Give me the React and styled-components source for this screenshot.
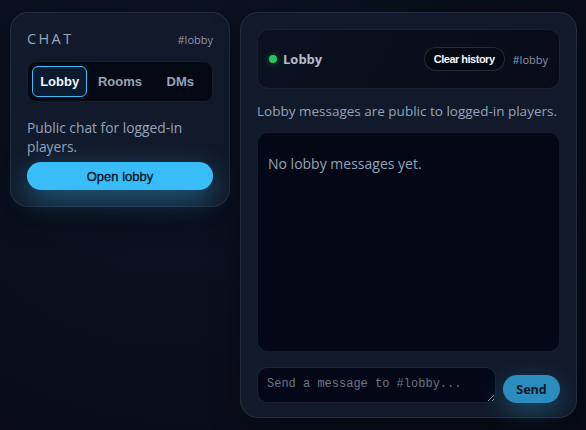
import React from "react";
import styled, { createGlobalStyle } from "styled-components";

const Global = createGlobalStyle`
  html, body { margin: 0; padding: 0; background: #090e1b; }
  body {
    font-family: "Open Sans", "Noto Sans", sans-serif;
    color: #cbd5e1;
    -webkit-font-smoothing: antialiased;
  }
  * { box-sizing: border-box; }
`;

const Page = styled.div`
  display: grid;
  grid-template-columns: 220px 337px;
  gap: 10px;
  align-items: start;
  padding: 12px 9px 0 10px;
  min-height: 430px;
  background: radial-gradient(circle at 30% 20%, #0d1324 0%, #090e1b 60%, #070b16 100%);
`;

const Card = styled.section`
  background: #111a2b;
  border: 1px solid rgba(148, 163, 184, 0.14);
  border-radius: 18px;
  padding: ${(p) => p.$pad || "16px"};
  display: flex;
  flex-direction: column;
  box-shadow: 0 10px 30px rgba(0, 0, 0, 0.35);
`;

const SideHead = styled.div`
  display: flex;
  justify-content: space-between;
  align-items: baseline;
  margin: 0 0 11px;
  line-height: 20px;
`;

const Title = styled.h2`
  margin: 0;
  font-size: 14.5px;
  line-height: 20px;
  font-weight: 400;
  letter-spacing: 2.4px;
  color: #9aa6b8;
`;

const Tag = styled.span`
  font-size: 11px;
  color: #8b97a8;
`;

const Tabs = styled.div`
  display: grid;
  grid-template-columns: repeat(3, 1fr);
  gap: 5px;
  padding: 4px;
  background: #050914;
  border: 1px solid rgba(148, 163, 184, 0.14);
  border-radius: 9px;
`;

const Tab = styled.button`
  height: 31px;
  border-radius: 6px;
  border: 1px solid ${(p) => (p.$active ? "#38bdf8" : "transparent")};
  background: ${(p) => (p.$active ? "#0c1a30" : "transparent")};
  color: ${(p) => (p.$active ? "#f1f5f9" : "#94a3b8")};
  font-family: "Liberation Sans", Arial, sans-serif;
  font-weight: 700;
  font-size: 13px;
  padding: 0;
  cursor: pointer;
`;

const Blurb = styled.p`
  margin: 16px 0 6px;
  font-size: 13.8px;
  line-height: 19px;
  color: #94a3b8;
`;

const PrimaryButton = styled.button`
  height: 28px;
  border: none;
  border-radius: 999px;
  background: #38bdf8;
  color: #08101e;
  font-family: "Liberation Sans", Arial, sans-serif;
  font-size: 13px;
  -webkit-text-stroke: 0.3px #08101e;
  box-shadow: 0 10px 28px rgba(56, 189, 248, 0.4);
  cursor: pointer;
`;

const Header = styled.div`
  height: 60px;
  display: flex;
  align-items: center;
  gap: 8px;
  padding: 0 11px;
  border: 1px solid rgba(148, 163, 184, 0.12);
  border-radius: 11px;
  background: linear-gradient(120deg, #0b1120 0%, #080c19 100%);
`;

const Dot = styled.span`
  width: 8px;
  height: 8px;
  border-radius: 50%;
  background: #22c55e;
  box-shadow: 0 0 6px rgba(34, 197, 94, 0.5);
`;

const RoomName = styled.span`
  font-size: 13px;
  font-weight: 700;
  color: #b4bccb;
  margin-left: -2px;
`;

const Spacer = styled.div`
  flex: 1;
`;

const Pill = styled.button`
  height: 24px;
  padding: 0 9px;
  border-radius: 999px;
  border: 1px solid rgba(148, 163, 184, 0.22);
  background: #050914;
  color: #f1f5f9;
  font-family: "Liberation Sans", Arial, sans-serif;
  font-weight: 700;
  font-size: 11px;
  letter-spacing: -0.5px;
  cursor: pointer;
`;

const Note = styled.p`
  margin: 12px 0 11px;
  font-size: 13.5px;
  line-height: 20px;
  color: #94a3b8;
`;

const Messages = styled.div`
  height: 220px;
  padding: 21px 10px;
  background: #040816;
  border: 1px solid rgba(148, 163, 184, 0.12);
  border-radius: 11px;
  font-size: 14px;
  color: #94a3b8;
`;

const Composer = styled.form`
  display: flex;
  align-items: center;
  gap: 7px;
  margin-top: 14px;
`;

const Input = styled.textarea`
  flex: 1;
  height: 36px;
  padding: 8px 9px;
  border-radius: 10px;
  border: 1px solid rgba(148, 163, 184, 0.18);
  background: #040816;
  color: #cbd5e1;
  font-family: "Liberation Mono", monospace;
  font-size: 12px;
  line-height: 16px;
  outline: none;
  &::placeholder { color: #6b7482; }
`;

const SendButton = styled.button`
  width: 57px;
  height: 28px;
  border: none;
  border-radius: 999px;
  background: #2b8cbe;
  color: #0b1626;
  font-family: "Open Sans", sans-serif;
  font-weight: 700;
  font-size: 12.5px;
  box-shadow: 0 8px 24px rgba(56, 189, 248, 0.3);
  margin-top: 9px;
`;

export default function App() {
  return (
    <>
      <Global />
      <Page>
        <Card $pad="16px">
          <SideHead>
            <Title>CHAT</Title>
            <Tag>#lobby</Tag>
          </SideHead>
          <Tabs>
            <Tab $active>Lobby</Tab>
            <Tab>Rooms</Tab>
            <Tab>DMs</Tab>
          </Tabs>
          <Blurb>Public chat for logged-in players.</Blurb>
          <PrimaryButton>Open lobby</PrimaryButton>
        </Card>
        <Card $pad="16px 16px 14px">
          <Header>
            <Dot />
            <RoomName>Lobby</RoomName>
            <Spacer />
            <Pill>Clear history</Pill>
            <Tag>#lobby</Tag>
          </Header>
          <Note>Lobby messages are public to logged-in players.</Note>
          <Messages>No lobby messages yet.</Messages>
          <Composer onSubmit={(e) => e.preventDefault()}>
            <Input placeholder="Send a message to #lobby..." />
            <SendButton type="submit">Send</SendButton>
          </Composer>
        </Card>
      </Page>
    </>
  );
}
